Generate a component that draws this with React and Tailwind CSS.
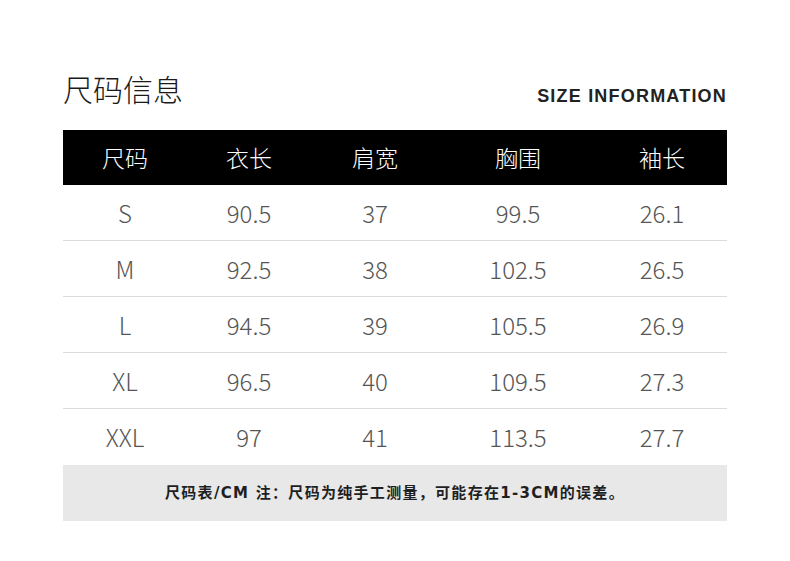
const cols = ['尺码', '衣长', '肩宽', '胸围', '袖长'];

const rows = [
  ['S', '90.5', '37', '99.5', '26.1'],
  ['M', '92.5', '38', '102.5', '26.5'],
  ['L', '94.5', '39', '105.5', '26.9'],
  ['XL', '96.5', '40', '109.5', '27.3'],
  ['XXL', '97', '41', '113.5', '27.7'],
];

const grid = 'grid grid-cols-[124px_124px_128px_158px_130px]';

export default function App() {
  return (
    <div className="w-[790px] h-[561px] bg-white font-['Noto_Sans_CJK_SC',sans-serif]">
      <div className="ml-[63px] w-[664px] pt-[68px]">
        {/* Title */}
        <div className="flex items-end justify-between h-[40px]">
          <h1 className="text-[30px] leading-[40px] font-light text-[#1a1a1a]">尺码信息</h1>
          <span className="mb-[2px] text-[18px] leading-[20px] font-bold text-[#222] tracking-[1.2px] font-['Liberation_Sans',sans-serif]">
            SIZE INFORMATION
          </span>
        </div>

        {/* Table */}
        <div className="mt-[22px]">
          <div className={`${grid} h-[55px] bg-black text-white items-center`}>
            {cols.map((c) => (
              <div key={c} className="text-center text-[23px] font-light">{c}</div>
            ))}
          </div>
          {rows.map((r, i) => (
            <div
              key={r[0]}
              className={`${grid} h-[56px] items-center text-[#555] ${i < rows.length - 1 ? 'border-b border-[#dcdcdc]' : ''}`}
            >
              {r.map((v, j) => (
                <div key={j} className="text-center text-[24px] font-light">{v}</div>
              ))}
            </div>
          ))}
          <div className="h-[56px] bg-[#e8e8e8] flex items-center justify-center text-[15px] font-semibold tracking-[1.3px] text-[#1f1f1f] font-['DejaVu_Sans','Noto_Sans_CJK_SC',sans-serif]">
            尺码表/CM 注：尺码为纯手工测量，可能存在1-3CM的误差。
          </div>
        </div>
      </div>
    </div>
  );
}
